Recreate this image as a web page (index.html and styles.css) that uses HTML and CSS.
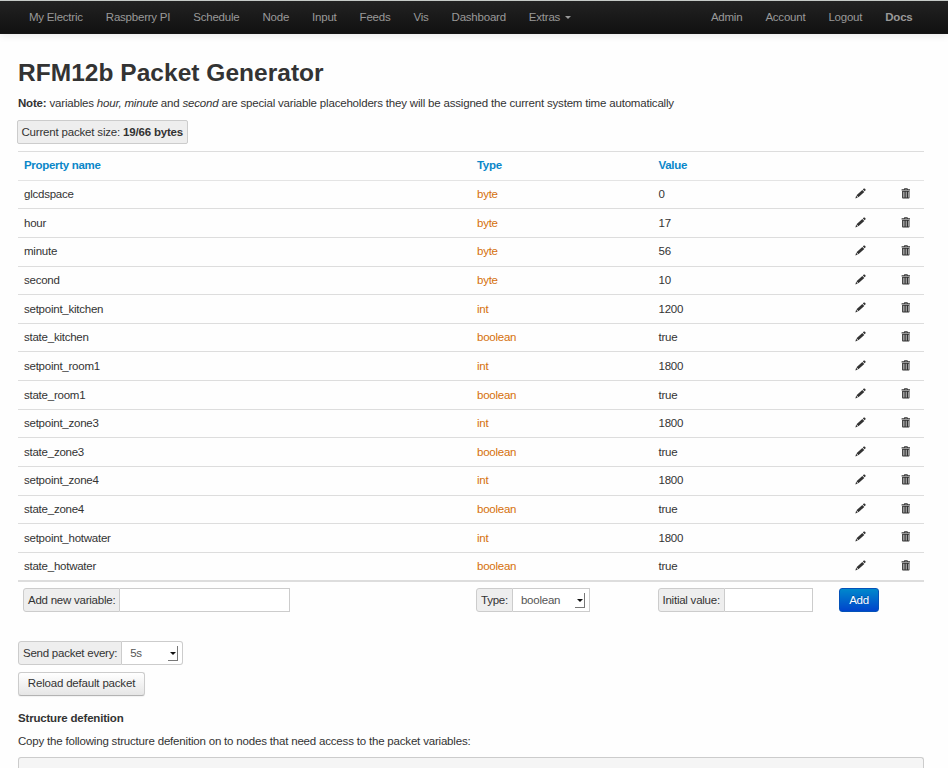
FILE: index.html
```
<!DOCTYPE html>
<html lang="en">
<head>
<meta charset="utf-8">
<title>RFM12b Packet Generator</title>
<link rel="stylesheet" href="styles.css">
</head>
<body>
<svg class="sprite" aria-hidden="true">
  <symbol id="pencil" viewBox="0 0 11 11"><path d="M.4 10.5 1.1 7.7 2.8 9.6Z M1.5 7.2 7.3 1.9 9.3 3.9 3.4 9.3Z M7.8 1.4 8.8.6Q9.4.2 10 .8L10.4 1.2Q10.9 1.8 10.4 2.4L9.7 3.3Z"/></symbol>
  <symbol id="trash" viewBox="0 0 10 11"><path fill-rule="evenodd" d="M3 1.3V.8Q3 .2 3.6.2H6.2Q6.8.2 6.8.8V1.3H9V2.5H.6V1.3Z M3.8 1.3H6V.9H3.8Z M1.1 3.1H8.5V9.7Q8.5 10.5 7.7 10.5H1.9Q1.1 10.5 1.1 9.7Z M2.1 3.8V9.4H2.6V3.8Z M3.7 3.8V9.4H4.2V3.8Z M5.4 3.8V9.4H5.9V3.8Z M7 3.8V9.4H7.5V3.8Z"/></symbol>
</svg>
<nav class="navbar">
  <div class="nav">
    <a>My Electric</a><a>Raspberry PI</a><a>Schedule</a><a>Node</a><a>Input</a><a>Feeds</a><a>Vis</a><a>Dashboard</a><a>Extras<i class="caret"></i></a>
  </div>
  <div class="nav">
    <a>Admin</a><a>Account</a><a>Logout</a><a class="docs">Docs</a>
  </div>
</nav>
<main>
  <h2>RFM12b Packet Generator</h2>
  <p class="note"><b>Note:</b> variables <i>hour, minute</i> and <i>second</i> are special variable placeholders they will be assigned the current system time automatically</p>
  <div class="size addon">Current packet size: <b>19/66 bytes</b></div>
  <section class="table">
    <div class="row head"><span>Property name</span><span>Type</span><span>Value</span></div>
    <div class="row first"><span>glcdspace</span><span class="type">byte</span><span>0</span><svg><use href="#pencil"/></svg><svg><use href="#trash"/></svg></div>
    <div class="row"><span>hour</span><span class="type">byte</span><span>17</span><svg><use href="#pencil"/></svg><svg><use href="#trash"/></svg></div>
    <div class="row"><span>minute</span><span class="type">byte</span><span>56</span><svg><use href="#pencil"/></svg><svg><use href="#trash"/></svg></div>
    <div class="row"><span>second</span><span class="type">byte</span><span>10</span><svg><use href="#pencil"/></svg><svg><use href="#trash"/></svg></div>
    <div class="row"><span>setpoint_kitchen</span><span class="type">int</span><span>1200</span><svg><use href="#pencil"/></svg><svg><use href="#trash"/></svg></div>
    <div class="row"><span>state_kitchen</span><span class="type">boolean</span><span>true</span><svg><use href="#pencil"/></svg><svg><use href="#trash"/></svg></div>
    <div class="row"><span>setpoint_room1</span><span class="type">int</span><span>1800</span><svg><use href="#pencil"/></svg><svg><use href="#trash"/></svg></div>
    <div class="row"><span>state_room1</span><span class="type">boolean</span><span>true</span><svg><use href="#pencil"/></svg><svg><use href="#trash"/></svg></div>
    <div class="row"><span>setpoint_zone3</span><span class="type">int</span><span>1800</span><svg><use href="#pencil"/></svg><svg><use href="#trash"/></svg></div>
    <div class="row"><span>state_zone3</span><span class="type">boolean</span><span>true</span><svg><use href="#pencil"/></svg><svg><use href="#trash"/></svg></div>
    <div class="row"><span>setpoint_zone4</span><span class="type">int</span><span>1800</span><svg><use href="#pencil"/></svg><svg><use href="#trash"/></svg></div>
    <div class="row"><span>state_zone4</span><span class="type">boolean</span><span>true</span><svg><use href="#pencil"/></svg><svg><use href="#trash"/></svg></div>
    <div class="row"><span>setpoint_hotwater</span><span class="type">int</span><span>1800</span><svg><use href="#pencil"/></svg><svg><use href="#trash"/></svg></div>
    <div class="row"><span>state_hotwater</span><span class="type">boolean</span><span>true</span><svg><use href="#pencil"/></svg><svg><use href="#trash"/></svg></div>
    <div class="row form">
      <div class="group variable"><span class="addon">Add new variable:</span><div class="field"></div></div>
      <div class="group kind"><span class="addon">Type:</span><div class="field">boolean<i class="arrow"></i></div></div>
      <div class="group initial"><span class="addon">Initial value:</span><div class="field"></div></div>
      <button class="primary">Add</button>
    </div>
  </section>
  <div class="group interval"><span class="addon">Send packet every:</span><div class="field">5s<i class="arrow"></i></div></div>
  <button class="reload">Reload default packet</button>
  <p class="structure"><b>Structure defenition</b></p>
  <p class="copy">Copy the following structure defenition on to nodes that need access to the packet variables:</p>
  <pre></pre>
</main>
</body>
</html>
```
FILE: styles.css
```
* { box-sizing: border-box; }
body { margin: 0; height: 768px; display: flex; flex-direction: column; background: #fefefe; color: #333; font: 11.5px/15.5px "Liberation Sans", Arial, sans-serif; letter-spacing: -.187px; }
.sprite { display: none; }
.navbar { flex: none; height: 34px; padding: 0 24px 0 17.5px; display: flex; justify-content: space-between; align-items: center; border-top: 1px solid #c5cac7; border-bottom: 1px solid #151515; background: linear-gradient(#222, #111); box-shadow: 0 1px 8px rgba(0,0,0,.1); color: #999; letter-spacing: -.22px; }
.nav { display: flex; height: 100%; }
.nav a { display: flex; align-items: center; padding: 1px 11.5px 0 11.5px; white-space: nowrap; }
.nav .docs { font-weight: bold; }
.caret { width: 0; height: 0; margin: 0 0 0 5px; border: 3px solid transparent; border-top-color: #999; border-bottom: 0; }
main { flex: 1; min-height: 0; display: flex; flex-direction: column; padding: 23px 24px 0 18px; }
h2 { margin: 0; height: 31px; font-size: 24.5px; line-height: 31px; letter-spacing: 0.03px; }
p { margin: 0; white-space: nowrap; }
.note { margin-top: 8px; }
.addon { background: #eee; border: 1px solid #ccc; border-radius: 3px 0 0 3px; height: 24px; line-height: 22px; padding: 0 4px; white-space: nowrap; }
.size { width: 171px; margin: 8px 0 0 -1px; border-radius: 2px; padding: 0 3.5px; }
.table { margin-top: 7.5px; letter-spacing: -.24px; }
.row { display: grid; grid-template-columns: 453px 181.5px 196.5px 46px auto; align-items: center; height: 28.64px; padding-left: 6px; border-top: 1px solid #ddd; }
.row > span { padding-top: 1px; }
.row.head { color: #0a87c9; font-weight: bold; padding-bottom: 1px; letter-spacing: -.3px; }
.row.first { border-top-color: #e4e4e4; }
.type { color: #d5700b; }
.row svg { width: 11px; height: 11px; fill: #333; margin-top: -2px; }
.row svg + svg { width: 10px; }
.row.form { grid-template-columns: 453px 181.5px 181px auto; height: 39px; padding-bottom: 1px; border-top: 2px solid #ddd; }
.group { display: flex; height: 24px; letter-spacing: -.24px; }
.group .addon { flex: none; }
.field { flex: 1; position: relative; background: #fff; border: 1px solid #ccc; border-left: 0; padding-left: 8px; line-height: 22px; color: #555; }
.variable { width: 267px; margin-left: -1px; }
.kind { width: 114px; margin-left: -1px; }
.initial { width: 155px; margin-left: -1px; }
.arrow { position: absolute; right: 4px; top: 4px; width: 10px; height: 15px; border-right: 1px solid #777; border-bottom: 1px solid #777; }
.arrow::after { content: ""; position: absolute; left: 2px; top: 6px; border: 3px solid transparent; border-top-color: #111; border-bottom: 0; }
button { flex: none; display: block; font: inherit; letter-spacing: inherit; height: 24px; padding: 0; border-radius: 3px; }
.primary { width: 40px; justify-self: start; margin-left: -.5px; color: #fff; border: 1px solid #0452b8; background: linear-gradient(#0088cc, #0044cc); text-shadow: 0 -1px 0 rgba(0,0,0,.25); }
.interval { flex: none; width: 165px; margin-top: 21.5px; }
.interval .field { border-radius: 0 3px 3px 0; }
.reload { width: 127px; margin-top: 7px; color: #333; border: 1px solid #ccc; border-bottom-color: #b3b3b3; background: linear-gradient(#fff, #e6e6e6); box-shadow: 0 1px 1px rgba(0,0,0,.05); }
.structure { margin-top: 15px; }
.copy { margin-top: 8px; }
pre { flex: 1; margin: 7px 0 0; background: #f5f5f5; border: 1px solid #ccc; border-bottom: 0; border-radius: 3px 3px 0 0; }
```
